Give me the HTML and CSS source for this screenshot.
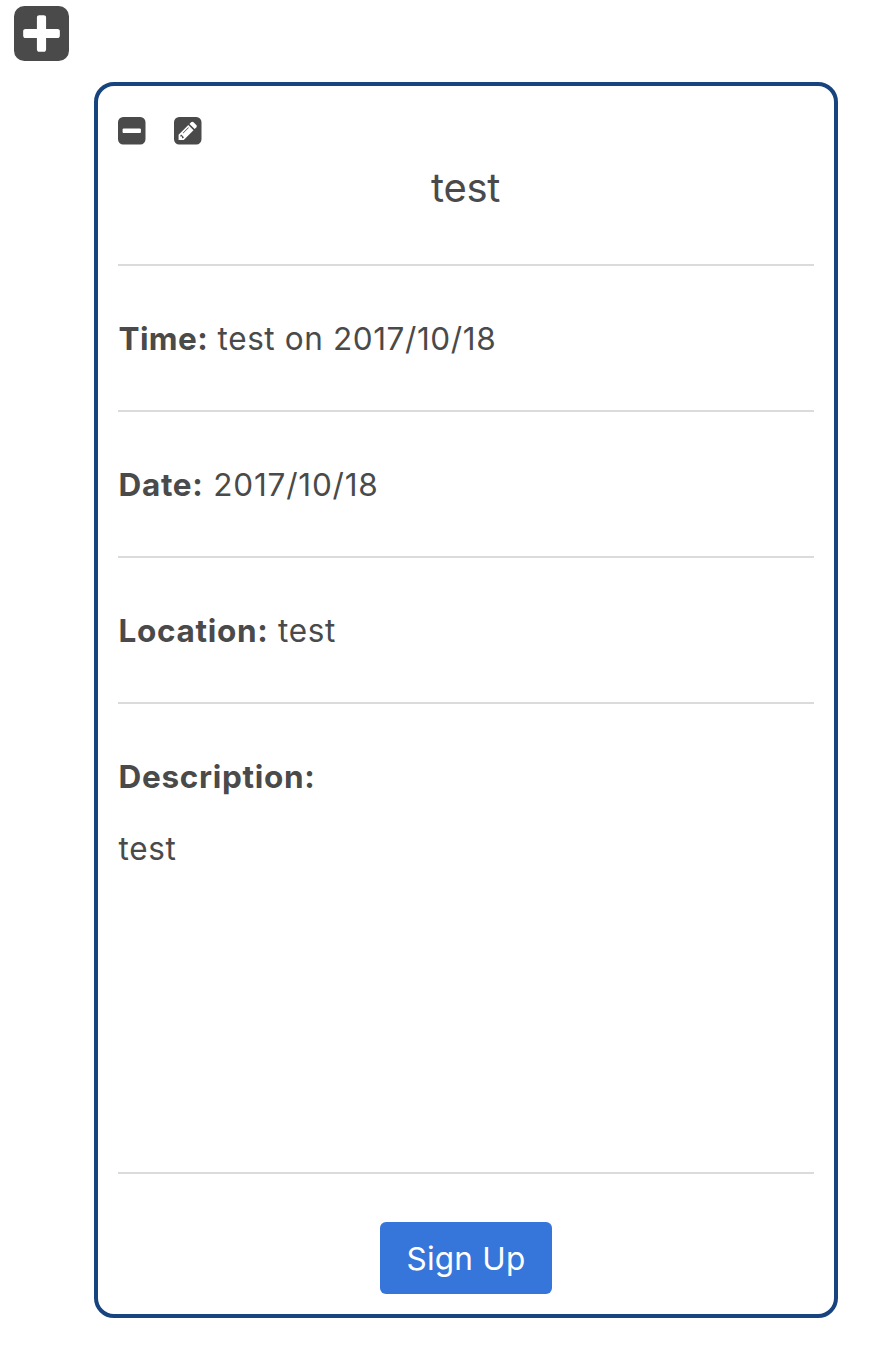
FILE: index.html
```html
<!DOCTYPE html>
<html lang="en">
<head>
<meta charset="utf-8">
<title>Events</title>
<link rel="stylesheet" href="styles.css">
</head>
<body>
<button class="icon-button add" aria-label="Add event"><svg viewBox="0 0 1536 1536"><path fill-rule="evenodd" d="M1280 832V704q0-26-19-45t-45-19H896V320q0-26-19-45t-45-19H704q-26 0-45 19t-19 45v320H320q-26 0-45 19t-19 45v128q0 26 19 45t45 19h320v320q0 26 19 45t45 19h128q26 0 45-19t19-45V896h320q26 0 45-19t19-45zM1536 288v960q0 119-84.500 203.500T1248 1536H288q-119 0-203.500-84.500T0 1248V288Q0 169 84.500 84.500T288 0h960q119 0 203.500 84.500T1536 288z"/></svg></button>
<article class="card">
<div class="tools">
<button class="icon-button small" aria-label="Remove"><svg viewBox="0 0 1536 1536"><path fill-rule="evenodd" d="M1280 832V704q0-26-19-45t-45-19H320q-26 0-45 19t-19 45v128q0 26 19 45t45 19h896q26 0 45-19t19-45zM1536 288v960q0 119-84.500 203.500T1248 1536H288q-119 0-203.500-84.500T0 1248V288Q0 169 84.500 84.500T288 0h960q119 0 203.500 84.500T1536 288z"/></svg></button>
<button class="icon-button small" aria-label="Edit"><svg viewBox="0 0 1536 1536"><path fill-rule="evenodd" d="M404 980l152 152-52 52h-56v-96h-96v-56zM818 582q14 13-3 30L524 903q-17 17-30 3-14-13 3-30l291-291q17-17 30-3zM544 1280l544-544-288-288-544 544v288h288zM1152 672l92-92q28-28 28-68t-28-68l-152-152q-28-28-68-28t-68 28l-92 92zM1536 288v960q0 119-84.500 203.500T1248 1536H288q-119 0-203.500-84.500T0 1248V288Q0 169 84.500 84.500T288 0h960q119 0 203.500 84.500T1536 288z"/></svg></button>
</div>
<h1 class="title">test</h1>
<p class="field time"><strong>Time:</strong> test on 2017/10/18</p>
<p class="field date"><strong>Date:</strong> 2017/10/18</p>
<p class="field location"><strong>Location:</strong> test</p>
<section class="description"><strong>Description:</strong><p>test</p></section>
<footer class="footer"><button class="signup">Sign Up</button></footer>
</article>
</body>
</html>
```
FILE: styles.css
```css
* { box-sizing: border-box; }
body { margin: 0; padding: 5.5px 48px 34px 94px; background: #fff; color: #4a4a4a; font: 400 31.5px/48px Inter, sans-serif; letter-spacing: .65px; }
p, h1 { margin: 0; }
button { border: 0; padding: 0; background: none; color: inherit; font: inherit; letter-spacing: inherit; }
.icon-button { display: block; width: 27.5px; height: 27.5px; }
.icon-button svg { display: block; width: 100%; height: 100%; fill: #4a4a4a; }
.add { width: 55px; height: 55px; margin-left: -80px; }
.card { width: 744px; height: 1236px; margin-top: 21.5px; padding: 31px 20px 20px; border: 4px solid #17437f; border-radius: 20px; display: flex; flex-direction: column; }
.tools { display: flex; gap: 28.9px; height: 28px; }
.title { height: 121px; padding: 18px 1px 0 0; font-size: 40px; line-height: 50px; font-weight: 400; text-align: center; letter-spacing: -.3px; border-bottom: 2px solid #dbdbdb; }
.field { height: 146px; padding: 49px 0 0 .5px; border-bottom: 2px solid #dbdbdb; }
.description { height: 470px; padding: 49px 0 0 .5px; border-bottom: 2px solid #dbdbdb; }
.description p { margin-top: 24px; }
.footer { padding-top: 48px; display: flex; justify-content: center; }
.signup { width: 172px; height: 72px; padding-top: 2px; border-radius: 6px; background: #3675da; color: #fff; letter-spacing: .2px; }
strong { display: inline-block; font-weight: 700; letter-spacing: .7px; }
.time strong { letter-spacing: .4px; }
.time { letter-spacing: .6px; }
.date { letter-spacing: .8px; }
```
